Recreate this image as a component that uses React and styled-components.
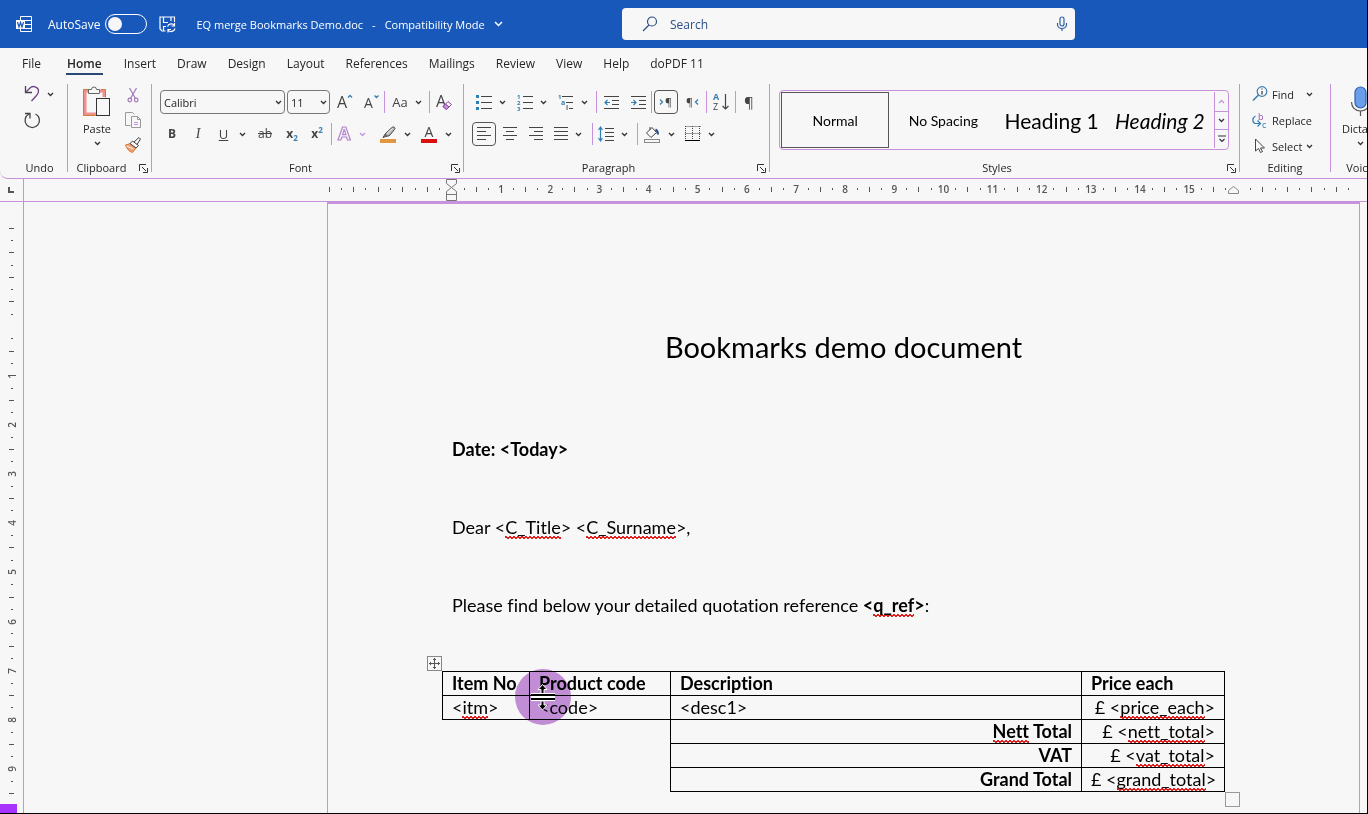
import React from "react";
import styled, { createGlobalStyle, css } from "styled-components";

const LILAC = "#c792dc";
const PAPER = "#f7f7f7";
const INK = "#262626";

const GlobalStyle = createGlobalStyle`
  * {
    box-sizing: border-box;
  }

  body {
    margin: 0;
    background: ${PAPER};
    color: ${INK};
    font-family: "Open Sans", "Noto Sans", sans-serif;
    font-size: 11px;
  }

  button, input, select {
    font: inherit;
    color: inherit;
  }

  button {
    display: inline-flex;
    align-items: center;
    justify-content: center;
    padding: 0;
    border: 0;
    background: none;
    cursor: pointer;
  }

  svg {
    display: block;
    flex: none;
    overflow: visible;
  }
`

const Window = styled.div`
  position: relative;
  display: flex;
  flex-direction: column;
  min-height: 100vh;
  overflow: hidden;
  border-right: 1px solid #000;
  border-bottom: 1px solid #000;
`

/* ---------- title bar ---------- */

const TitleBar = styled.header`
  display: grid;
  grid-template-columns: 622px minmax(200px, 453px) 1fr;
  align-items: center;
  height: 48px;
  background: #1858bb;
  color: #fff;
`

const TitleLeft = styled.div`
  display: flex;
  align-items: center;
  padding-left: 16px;
  white-space: nowrap;
`

const AutoSave = styled.label`
  display: flex;
  align-items: center;
  gap: 5px;
  margin: 0 12px 0 15px;
  font-size: 12px;
`

const Switch = styled.input`
  appearance: none;
  display: flex;
  align-items: center;
  width: 42px;
  height: 20px;
  margin: 0;
  padding: 0 2px;
  border: 1px solid #fff;
  border-radius: 10px;

  &::before {
    content: "";
    width: 14px;
    height: 14px;
    border-radius: 50%;
    background: ${PAPER};
  }
`

const FileName = styled.button`
  gap: 9px;
  margin-left: 20px;
`

const SearchBox = styled.label`
  display: flex;
  align-items: center;
  height: 32px;
  padding: 0 7px 0 20px;
  border-radius: 4px;
  background: ${PAPER};
  color: #2b4f86;
  font-size: 12px;

  input {
    flex: 1;
    min-width: 0;
    margin-left: 12px;
    padding: 0;
    border: 0;
    outline: 0;
    background: none;
  }

  input::placeholder {
    color: #2b4f86;
    opacity: 1;
  }
`

/* ---------- tabs ---------- */

const Tabs = styled.nav`
  display: flex;
  gap: 21px;
  height: 32px;
  padding: 4px 22px 0;
`

const Tab = styled.a`
  height: 24px;
  line-height: 24px;
  font-size: 12px;
  color: ${INK};
  text-decoration: none;
  white-space: nowrap;

  ${({ $active }) => $active && css`
    height: 23px;
    margin-left: 4px;
    padding: 0 1px;
    border-bottom: 2px solid #2b4a73;
    font-weight: 600;
  `}
`

/* ---------- ribbon ---------- */

const Ribbon = styled.section`
  display: flex;
  height: 99px;
  padding-top: 4px;
  border-bottom: 1px solid ${LILAC};
  border-bottom-left-radius: 8px;
`

const Group = styled.div`
  display: flex;
  flex-direction: column;
  flex: ${({ $grow }) => ($grow ? "1 0 470px" : "none")};
  width: ${({ $w }) => $w}px;
  height: 88px;
  padding: ${({ $pad }) => $pad || "0"};
  border-right: ${({ $last }) => ($last ? "0" : `1px solid ${LILAC}`)};
`

const GroupFoot = styled.div`
  position: relative;
  height: 8px;
  margin-top: auto;
  line-height: 8px;
  font-size: 11px;
  text-align: center;
  padding-right: ${({ $shift }) => $shift || 0}px;

  button {
    position: absolute;
    right: 3px;
    top: 0;
  }
`

const Row = styled.div`
  display: flex;
  align-items: center;
  height: 24px;
  margin-bottom: 8px;
`

const Stack = styled.div`
  display: flex;
  flex-direction: column;
  align-items: flex-start;
  gap: ${({ $gap }) => $gap}px;
`

const ClipLayout = styled.div`
  display: flex;
  align-items: flex-start;
`

const Tool = styled.button`
  flex: none;
  gap: 7px;
  width: ${({ $w }) => $w || 24}px;
  height: ${({ $h }) => $h || 24}px;
  margin-left: ${({ $ml }) => $ml || 0}px;
  border-radius: 4px;
  ${({ $on }) => $on && "border: 1px solid #555;"}
`

const Sep = styled.span`
  flex: none;
  width: 1px;
  height: 22px;
  margin-left: ${({ $ml }) => $ml || 0}px;
  background: ${LILAC};
`

const Combo = styled.div`
  position: relative;
  width: ${({ $w }) => $w}px;
  height: 24px;
  margin-right: ${({ $mr }) => $mr || 0}px;

  select {
    appearance: none;
    width: 100%;
    height: 24px;
    padding: 0 3px;
    border: 1px solid #777;
    border-radius: 4px;
    background: none;
  }

  svg {
    position: absolute;
    right: 3px;
    top: 10px;
    pointer-events: none;
  }
`

const Glyph = styled.span`
  min-width: 16px;
  text-align: center;
  font-size: ${({ $size }) => $size || 13}px;
  line-height: 16px;
  color: #444;
  font-weight: ${({ $bold }) => ($bold ? 700 : 400)};
  font-style: ${({ $italic }) => ($italic ? "italic" : "normal")};
  font-family: ${({ $serif }) => ($serif ? '"Liberation Serif", serif' : "inherit")};
  text-decoration: ${({ $line }) => $line || "none"};
  white-space: nowrap;

  sub, sup {
    font-size: 8px;
    line-height: 1;
    color: #3a7fae;
  }
`

const BigTool = styled.button`
  flex-direction: column;
  gap: 4px;
  width: ${({ $w }) => $w}px;
  padding-top: 2px;
  line-height: 16px;
`

const EditTool = styled.button`
  gap: 4px;
  height: 20px;

  svg + span {
    margin-right: ${({ $gap }) => $gap || 0}px;
  }
`

const Gallery = styled.div`
  display: flex;
  height: 60px;
  margin-right: 10px;
  padding: 1px 0 1px 1px;
  border: 1px solid ${LILAC};
  border-radius: 4px;
`

const StyleItem = styled.button`
  flex: 1 1 0;
  min-width: 0;
  height: 56px;
  color: #000;
  white-space: nowrap;
  font-family: Lato, sans-serif;
  font-size: ${({ $head }) => ($head ? 21 : 14)}px;
  font-style: ${({ $italic }) => ($italic ? "italic" : "normal")};
  border: 1px solid ${({ $on }) => ($on ? "#555" : "transparent")};
`

const GalleryNav = styled.div`
  display: grid;
  grid-template-rows: repeat(3, 1fr);
  width: 14px;
  border-left: 1px solid ${LILAC};

  button + button {
    border-top: 1px solid ${LILAC};
  }
`

/* ---------- rulers ---------- */

const TopRuler = styled.div`
  display: grid;
  grid-template-columns: 24px 299px 1fr 12px;
  height: 23px;
  border-bottom: 1px solid ${LILAC};
`

const RulerCorner = styled.div`
  display: flex;
  align-items: center;
  padding-left: 8px;
  border-right: 1px solid ${LILAC};
`

const Scale = styled.div`
  display: grid;
  ${({ $vertical }) => $vertical
    ? "grid-template-rows: repeat(47, minmax(0, 1fr)); height: 578px;"
    : "grid-template-columns: repeat(84, minmax(0, 1fr)); grid-column: 3; padding-bottom: 2px;"}
`

const Mark = styled.span`
  position: relative;
  display: flex;
  align-items: center;
  justify-content: center;
  font-size: 10px;
  line-height: 12px;
  color: #555;

  i {
    background: #555;
    width: ${({ $vertical, $tall }) => ($vertical ? ($tall ? 5 : 2) : 1)}px;
    height: ${({ $vertical, $tall }) => ($vertical ? 1 : $tall ? 5 : 2)}px;
  }

  b {
    font-weight: 600;
    ${({ $vertical }) => $vertical && "transform: rotate(-90deg);"}
  }

  svg {
    position: absolute;
    top: 0;
  }
`

/* ---------- document ---------- */

const Workspace = styled.main`
  display: grid;
  grid-template-columns: 24px 303px 1fr 7px;
  flex: 1;
`

const SideRuler = styled.div`
  padding-top: 20px;
  border-right: 1px solid ${LILAC};
`

const Page = styled.article`
  grid-column: 3;
  padding: 125px 134px 0 124px;
  border: 1px solid ${LILAC};
  border-top-width: 2px;
  border-bottom: 0;
  color: #000;
  font-family: Lato, Carlito, sans-serif;
  font-size: 18px;
  line-height: 24px;
  font-variant-ligatures: none;

  h1 {
    margin: 0 -10px 72px 0;
    font-size: 29px;
    line-height: 36px;
    font-weight: 400;
    text-align: center;
  }

  p {
    margin: 0 0 54px;
  }
`

const Typo = styled.span`
  padding-bottom: 1px;
  background:
    linear-gradient(45deg, transparent 40%, #d22 40%, #d22 60%, transparent 60%) 0 100% / 4px 3px repeat-x,
    linear-gradient(135deg, transparent 40%, #d22 40%, #d22 60%, transparent 60%) 2px 100% / 4px 3px repeat-x;
`

const TableWrap = styled.div`
  position: relative;
  margin: 0 0 0 -10px;
`

const Table = styled.table`
  width: 100%;
  border-collapse: collapse;
  table-layout: fixed;

  th, td {
    height: 24px;
    padding: 0 9px;
    border: 1px solid #000;
    line-height: 23px;
    text-align: left;
    white-space: nowrap;
  }

  .amount {
    text-align: right;
  }

  .blank {
    border: 0;
  }
`

const MoveHandle = styled.button`
  position: absolute;
  left: -15px;
  top: -15px;
  width: 15px;
  height: 15px;
  border: 1px solid #888;
`

const ResizeHandle = styled.span`
  position: absolute;
  right: -15px;
  bottom: -15px;
  width: 15px;
  height: 15px;
  border: 1px solid #999;
`

const Pointer = styled.div`
  position: absolute;
  left: 73px;
  top: -2px;
  display: grid;
  place-items: center;
  width: 56px;
  height: 56px;

  &::before {
    content: "";
    position: absolute;
    inset: 0;
    border-radius: 50%;
    background: ${LILAC};
    mix-blend-mode: multiply;
  }

  svg {
    position: relative;
  }
`

const Progress = styled.div`
  position: absolute;
  left: 0;
  bottom: -1px;
  width: 17px;
  height: 10px;
  background: #a833ff;
`

/* ---------- icons ---------- */

const Icon = ({ w = 16, h = 16, color = "#444", sw = 1, children }) => (
  <svg width={w} height={h} viewBox={`0 0 ${w} ${h}`} fill="none" stroke={color} strokeWidth={sw} aria-hidden="true">
    {children}
  </svg>
)

const Caret = ({ color = "#333", up }) => (
  <Icon w={7} h={5} color={color} sw={1.3}>
    <path d={up ? "M1 4l2.5-2.5L6 4" : "M1 1l2.5 2.5L6 1"} />
  </Icon>
)

const SvgText = ({ children, fill = "#444", size = 14, ...rest }) => (
  <text stroke="none" fill={fill} fontSize={size} {...rest}>{children}</text>
)

const WordIcon = () => (
  <Icon w={17} h={17} color="#fff">
    <path d="M4.5 4V.5h11v15h-11V13M9 4.500h6M9 8.500h6M9 12.500h6" />
    <rect x="0" y="4" width="9" height="9" fill="#fff" stroke="none" />
    <path stroke="#1858bb" strokeWidth="1.2" d="M1.500 6l1.500 5 1.500-4.500 1.500 4.500L7.500 6" />
  </Icon>
)

const SaveIcon = () => (
  <Icon w={17} h={17} color="#fff" sw={1.2}>
    <path d="M6.500 15H3L1 13V1h14.500v5M4.500 1v5.500H9M12 1v4M4.500 15v-4.500h2.500" />
    <path d="M8.500 10.500a4 4 0 0 1 7-1M15.500 7v3h-3M16 12.500a4 4 0 0 1-7 1.500M9 16.500v-3h3" />
  </Icon>
)

const SearchIcon = () => (
  <Icon color="#2b4f86" sw={1.2}>
    <circle cx="10" cy="5.500" r="4.500" />
    <path d="M7 9L1 15" />
  </Icon>
)

const SmallMic = () => (
  <Icon w={12} h={16} color="#2b5fa0" sw={1.2}>
    <rect x="4" y="1" width="4" height="9" rx="2" />
    <path d="M1.500 7v1.500a4.500 4 0 0 0 9 0V7M6 12.500V15" />
  </Icon>
)

const UndoIcon = () => (
  <Icon h={18} sw={1.3}>
    <path d="M1.500 1v6.500H8" />
    <path d="M1.500 7.500L6 3c3-3 8-1 8.500 2.500.3 2-.5 3.500-2 5L7.500 16" stroke="#6b3f80" />
  </Icon>
)

const RedoIcon = () => (
  <Icon w={17} h={17} sw={1.3}>
    <path d="M11.500 2a7.200 7.200 0 1 1-6.500 0M1 1.500h5v5" />
  </Icon>
)

const PasteIcon = () => (
  <Icon w={28} h={31}>
    <path d="M7 5H2v23h11M17 5h4v6" stroke="#f0908c" strokeWidth="3" />
    <path d="M7 3.500H.5v26h12M18 3.500h4.500v8" stroke="#c9812f" />
    <path d="M5.500 7.500v-4h3a2.500 2.500 0 0 1 5 0h3v4z" fill={PAPER} stroke="#666" />
    <rect x="13.500" y="12.500" width="13" height="17" fill={PAPER} stroke="#333" />
  </Icon>
)

const CutIcon = () => (
  <Icon w={12} color="#a078bd" sw={1.2}>
    <path d="M2.500 1l6 10.500M9.500 1l-6 10.500" />
    <circle cx="2.800" cy="13" r="1.800" />
    <circle cx="9.200" cy="13" r="1.800" />
  </Icon>
)

const CopyIcon = () => (
  <Icon w={17} h={17} color="#999">
    <path d="M5.500 13.500h-5V.5h7l2 2" />
    <path d="M6.500 4.500h6l3 3v8h-9zM12.500 4.500v3h3" />
    <path d="M9 10.500h4M9 12.500h4" stroke={LILAC} />
  </Icon>
)

const PainterIcon = () => (
  <Icon>
    <path d="M.5 8l5-1.500 5.500 4.500-3.500 4.500C4 14.500 2 12 .5 8z" fill="#f0a070" stroke="#d9772b" />
    <path d="M1.500 9l7 3" stroke={PAPER} />
    <path d="M5 6.500L7.500 4l6 4.500L11 11zM9 5l5-4.500L15.500 2 12 7.500" fill={PAPER} stroke="#444" />
  </Icon>
)

const GrowA = ({ shrink }) => (
  <Icon w={17} h={18}>
    <SvgText x="0" y="15" size={shrink ? 14 : 16}>A</SvgText>
    <path d={shrink ? "M10.500 2.500l2 2 2-2" : "M11 4.500l2-2 2 2"} stroke="#3a7fae" strokeWidth="1.300" />
  </Icon>
)

const ClearFormat = () => (
  <Icon w={17} h={18}>
    <SvgText x="0" y="14" size={16}>A</SvgText>
    <path d="M7 13.500l5-5 3.500 3-5 5z" fill={PAPER} stroke="#8a3fa0" />
    <path d="M7 13.500l2.500-2.500 3.500 3-2.500 2.500z" fill={LILAC} stroke="#8a3fa0" />
  </Icon>
)

const TextEffects = () => (
  <Icon>
    <text x="2" y="14" fontSize="18" fontWeight="700" fill={PAPER} stroke="#b486cc" strokeWidth="1.200">A</text>
  </Icon>
)

const Highlighter = () => (
  <Icon w={17} h={17}>
    <path d="M5.500 7.500L12 1.500c1.500-1.500 4 .5 2.500 2L9 10H6zM5.500 7.500L3 11.500l4-1.500" fill="#bbb" />
    <path d="M7 7.500L12.500 2.500" stroke={PAPER} />
    <rect x="0" y="13" width="16" height="4" fill="#e2973f" stroke="none" />
  </Icon>
)

const FontColor = () => (
  <Icon w={17} h={17}>
    <SvgText x="3.500" y="11" size={14}>A</SvgText>
    <rect x="0" y="13" width="16" height="4" fill="#d91010" stroke="none" />
  </Icon>
)

const Bullets = () => (
  <Icon>
    <path d="M5 2.500h11M5 8.500h11M5 14.500h11" />
    <path d="M0 2.500h3M0 8.500h3M0 14.500h3" stroke="#2f7fb5" strokeWidth="3" />
  </Icon>
)

const Numbering = () => (
  <Icon>
    <path d="M6 2.500h10M6 8.500h10M6 14.500h10" />
    {[1, 2, 3].map((n) => (
      <SvgText key={n} x="0" y={n * 6 - 1} size={6} fill="#2f7fb5" fontWeight="700">{n}</SvgText>
    ))}
  </Icon>
)

const Multilevel = () => (
  <Icon>
    <path d="M4 2.500h11M8 8.500h7M11 14.500h4" />
    <SvgText x="0" y="5" size={6} fill="#2f7fb5" fontWeight="700">1</SvgText>
    <SvgText x="3" y="11" size={7} fill="#2f7fb5" fontWeight="700">a</SvgText>
    <SvgText x="8" y="16" size={7} fill="#666" fontWeight="700">i</SvgText>
  </Icon>
)

const Indent = ({ out }) => (
  <Icon w={15} h={15}>
    <path d="M0 1.500h15M8 5.500h7M8 9.500h7M0 13.500h15" />
    <path d={out ? "M6 7.500H1M3.500 5L1 7.500 3.500 10" : "M0 7.500h5M2.500 5L5 7.500 2.500 10"} stroke="#2f7fb5" strokeWidth="1.200" />
  </Icon>
)

const Direction = ({ rtl }) => (
  <Icon w={14}>
    <path d={rtl ? "M13 5.500L10.500 8l2.500 2.500" : "M1 5.500L3.500 8 1 10.500"} stroke="#3a7fae" strokeWidth="1.300" />
    <SvgText x={rtl ? 1 : 6} y="12" size={11}>¶</SvgText>
  </Icon>
)

const SortIcon = () => (
  <Icon w={17} h={18}>
    <SvgText x="0" y="7" size={9} fill="#3a7fae" fontWeight="700">A</SvgText>
    <SvgText x="0" y="17" size={9}>Z</SvgText>
    <path d="M12.500 1v15M9.500 13l3 3 3-3" strokeWidth="1.200" />
  </Icon>
)

const ALIGN = {
  left: ["0h14", "0h9", "0h14", "0h9"],
  center: ["0h14", "3h8", "0h14", "3h8"],
  right: ["0h14", "5h9", "0h14", "5h9"],
  justify: ["0h14", "0h14", "0h14", "0h14"],
}

const Align = ({ kind }) => (
  <Icon w={14} h={14}>
    <path d={ALIGN[kind].map((seg, i) => `M${seg.replace("h", ` ${i * 4 + 0.5}h`)}`).join("")} />
  </Icon>
)

const LineSpacing = () => (
  <Icon>
    <path d="M7 2.500h9M7 6.500h9M7 10.500h9M7 14.500h9" />
    <path d="M2.500 1v14M.5 4l2-3 2 3M.5 12l2 3 2-3" stroke="#2f7fb5" strokeWidth="1.200" />
  </Icon>
)

const Shading = () => (
  <Icon w={17} h={17}>
    <path d="M2.500 7L8 1.500l4.500 5L7 11.500zM6 4V1" />
    <path d="M11.500 3.500c2 1 2.500 3 2.500 5" stroke="#2b4f86" strokeWidth="2" />
    <rect x=".5" y="13.500" width="15" height="3" stroke="#888" />
  </Icon>
)

const Borders = () => (
  <Icon>
    <path d="M.5 .5h15M.5 7.500h15M.5 0v14M7.500 0v14M14.500 0v14" strokeDasharray="1 1" />
    <path d="M0 14.500h15" stroke="#000" />
  </Icon>
)

const Launcher = () => (
  <Icon w={9} h={9} color="#333">
    <path d="M.5 7V.5H7M3 3l4 4M8.500 4v4.500H4" />
  </Icon>
)

const FindIcon = () => (
  <Icon color="#3a7fae" sw={1.2}>
    <circle cx="10" cy="5.500" r="4.800" />
    <path d="M6.500 9L1 14.500" strokeWidth="1.600" />
    <path d="M10 2.500v1M10 5v3.500" stroke="#333" />
  </Icon>
)

const ReplaceIcon = () => (
  <Icon h={17}>
    <SvgText x="6" y="8" size={9} fill="#8a4fa8">b</SvgText>
    <SvgText x="10" y="16" size={9} fill="#2f7fb5">c</SvgText>
    <path d="M3.500 4C0 6 0 11 3.500 11.500H8M5.500 8.500l3 3-3 3" stroke="#2f7fb5" strokeWidth="1.200" />
  </Icon>
)

const SelectIcon = () => (
  <Icon>
    <path d="M3.500 1v12l3-2.500 2 4 2-1-2-3.500h4z" />
  </Icon>
)

const DictateIcon = () => (
  <Icon w={21} h={31} color="#555" sw={1.2}>
    <rect x="5" y="1" width="11" height="21" rx="5.500" fill="#6a9eea" stroke="#2f62ad" />
    <path d="M1.500 16c0 5 3.500 9 9 9s9-4 9-9M10.500 25v5" />
  </Icon>
)

const RowResize = () => (
  <Icon w={24} h={28} color="#000">
    <path d="M0 12h24M0 16h24" stroke="#fff" strokeWidth="4" />
    <path d="M0 12h24M0 16h24" strokeWidth="2" />
    <path d="M11.500 1.500l4.500 5h-3v4h-3v-4H7zM11.500 27l4.500-5h-3v-4h-3v4H7z" fill="#000" stroke="#fff" />
  </Icon>
)

/* ---------- pieces ---------- */

function Split({ w, label, children, muted }) {
  return (
    <Tool $w={w} aria-label={label}>
      {children}
      <Caret color={muted ? LILAC : "#333"} />
    </Tool>
  )
}

function Foot({ children, launcher, shift }) {
  return (
    <GroupFoot $shift={shift}>
      {children}
      {launcher && <button aria-label={`${children} settings`}><Launcher /></button>}
    </GroupFoot>
  )
}

// four marks to the centimetre, counted from the margin
function Marks({ from, count, vertical, last }) {
  return (
    <Scale $vertical={vertical}>
      {Array.from({ length: count }, (_, n) => {
        const i = from + n
        const numbered = i > 0 && i % 4 === 0 && i / 4 <= last
        const atIndent = i === 0 || i / 4 === last + 1
        return (
          <Mark key={i} $vertical={vertical} $tall={i % 2 === 0}>
            {numbered && <b>{i / 4}</b>}
            {!numbered && !atIndent && <i />}
            {!vertical && i === 0 && (
              <Icon w={13} h={22} color="#777">
                <path d="M1.500 .5h10v4l-5 4-5-4zM1.500 15.500v-3l5-4 5 4v3zM1.500 15.500h10v6h-10z" />
              </Icon>
            )}
            {!vertical && i !== 0 && atIndent && (
              <Icon w={21} h={22} color="#888">
                <path d="M.5 14.500v-3l5-4 5 4v3z" />
              </Icon>
            )}
          </Mark>
        )
      })}
    </Scale>
  )
}

const TABS = ["File", "Home", "Insert", "Draw", "Design", "Layout", "References", "Mailings", "Review", "View", "Help", "doPDF 11"]

const TOTALS = [
  [<><Typo>Nett</Typo> Total</>, "nett_total"],
  ["VAT", "vat_total"],
  ["Grand Total", "grand_total"],
]

const Price = ({ field }) => <td className="amount">£ &lt;<Typo>{field}</Typo>&gt;</td>

export default function App() {
  return (
    <Window>
      <GlobalStyle />
      <TitleBar>
        <TitleLeft>
          <WordIcon />
          <AutoSave>AutoSave <Switch type="checkbox" role="switch" /></AutoSave>
          <button aria-label="Save"><SaveIcon /></button>
          <FileName>
            <span>EQ merge Bookmarks Demo.doc</span>
            <span>-</span>
            <span>Compatibility Mode</span>
            <Icon w={9} h={6} color="#fff" sw={1.5}><path d="M1 1l3.500 3.500L8 1" /></Icon>
          </FileName>
        </TitleLeft>
        <SearchBox>
          <SearchIcon />
          <input type="search" placeholder="Search" aria-label="Search" />
          <SmallMic />
        </SearchBox>
      </TitleBar>

      <Tabs>
        {TABS.map((tab) => (
          <Tab key={tab} href={`#${tab}`} $active={tab === "Home"}>{tab}</Tab>
        ))}
      </Tabs>

      <Ribbon>
        <Group $w={68} $pad="0 0 0 12px">
          <Stack $gap={6}>
            <Tool $w={54} $h={20} aria-label="Undo"><UndoIcon /><Caret /></Tool>
            <Tool $w={40} $h={20} aria-label="Redo"><RedoIcon /></Tool>
          </Stack>
          <Foot>Undo</Foot>
        </Group>

        <Group $w={84}>
          <ClipLayout>
            <BigTool $w={58}><PasteIcon />Paste<Caret /></BigTool>
            <Stack $gap={3}>
              <Tool $w={14} $h={22} aria-label="Cut"><CutIcon /></Tool>
              <Tool $w={14} $h={22} aria-label="Copy"><CopyIcon /></Tool>
              <Tool $w={14} $h={22} aria-label="Format painter"><PainterIcon /></Tool>
            </Stack>
          </ClipLayout>
          <Foot launcher shift={16}>Clipboard</Foot>
        </Group>

        <Group $w={312} $pad="6px 0 0 8px">
          <Row>
            <Combo $w={125} $mr={2}>
              <select aria-label="Font" defaultValue="Calibri"><option>Calibri</option></select>
              <Caret />
            </Combo>
            <Combo $w={43}>
              <select aria-label="Font size" defaultValue="11"><option>11</option></select>
              <Caret />
            </Combo>
            <Tool $w={30} aria-label="Grow font"><GrowA /></Tool>
            <Tool $w={24} aria-label="Shrink font"><GrowA shrink /></Tool>
            <Sep />
            <Tool $w={44} aria-label="Change case"><Glyph>Aa</Glyph><Caret /></Tool>
            <Sep />
            <Tool $w={28} aria-label="Clear formatting"><ClearFormat /></Tool>
          </Row>
          <Row>
            <Tool aria-label="Bold"><Glyph $bold $size={12}>B</Glyph></Tool>
            <Tool $w={28} aria-label="Italic"><Glyph $italic $serif $size={14}>I</Glyph></Tool>
            <Split w={37} label="Underline"><Glyph $line="underline">U</Glyph></Split>
            <Tool $w={32} aria-label="Strikethrough"><Glyph $line="line-through" $size={12}>ab</Glyph></Tool>
            <Tool $w={22} aria-label="Subscript"><Glyph $bold $size={12}>x<sub>2</sub></Glyph></Tool>
            <Tool $w={28} aria-label="Superscript"><Glyph $bold $size={12}>x<sup>2</sup></Glyph></Tool>
            <Sep />
            <Split w={38} label="Text effects" muted><TextEffects /></Split>
            <Split w={50} label="Highlight"><Highlighter /></Split>
            <Split w={32} label="Font colour"><FontColor /></Split>
          </Row>
          <Foot launcher shift={22}>Font</Foot>
        </Group>

        <Group $w={306} $pad="6px 0 0 8px">
          <Row>
            <Split w={38} label="Bullets"><Bullets /></Split>
            <Split w={44} label="Numbering"><Numbering /></Split>
            <Split w={38} label="Multilevel list"><Multilevel /></Split>
            <Sep $ml={4} />
            <Tool $w={28} aria-label="Decrease indent"><Indent out /></Tool>
            <Tool $w={26} aria-label="Increase indent"><Indent /></Tool>
            <Sep />
            <Tool $ml={2} $on aria-label="Left to right"><Direction /></Tool>
            <Tool $w={28} aria-label="Right to left"><Direction rtl /></Tool>
            <Sep />
            <Tool $w={28} aria-label="Sort"><SortIcon /></Tool>
            <Sep />
            <Tool $w={26} aria-label="Show marks"><Glyph $size={15}>¶</Glyph></Tool>
          </Row>
          <Row>
            <Tool $on aria-label="Align left"><Align kind="left" /></Tool>
            <Tool $w={28} aria-label="Centre"><Align kind="center" /></Tool>
            <Tool aria-label="Align right"><Align kind="right" /></Tool>
            <Split w={40} label="Justify"><Align kind="justify" /></Split>
            <Sep $ml={4} />
            <Split w={40} label="Line spacing"><LineSpacing /></Split>
            <Sep $ml={4} />
            <Split w={42} label="Shading"><Shading /></Split>
            <Split w={40} label="Borders"><Borders /></Split>
          </Row>
          <Foot launcher shift={24}>Paragraph</Foot>
        </Group>

        <Group $grow $pad="6px 0 0 9px">
          <Gallery>
            <StyleItem $on>Normal</StyleItem>
            <StyleItem>No Spacing</StyleItem>
            <StyleItem $head>Heading 1</StyleItem>
            <StyleItem $head $italic>Heading 2</StyleItem>
            <GalleryNav>
              <button aria-label="Previous styles"><Caret up color={LILAC} /></button>
              <button aria-label="Next styles"><Caret /></button>
              <button aria-label="More styles">
                <Icon w={8} h={8} color="#333" sw={1.2}><path d="M0 1h8M1.500 4L4 6.500 6.500 4" /></Icon>
              </button>
            </GalleryNav>
          </Gallery>
          <Foot launcher shift={24}>Styles</Foot>
        </Group>

        <Group $w={91} $pad="0 0 0 12px">
          <Stack $gap={6}>
            <EditTool $gap={8}><FindIcon /><span>Find</span><Caret /></EditTool>
            <EditTool><ReplaceIcon /><span>Replace</span></EditTool>
            <EditTool><SelectIcon /><span>Select</span><Caret /></EditTool>
          </Stack>
          <Foot shift={12}>Editing</Foot>
        </Group>

        <Group $w={58} $last>
          <BigTool $w={58}><DictateIcon />Dictate<Caret /></BigTool>
          <Foot>Voice</Foot>
        </Group>
      </Ribbon>

      <TopRuler>
        <RulerCorner>
          <Icon w={7} h={7} color="#555" sw={2}><path d="M1 0v5h5" /></Icon>
        </RulerCorner>
        <Marks from={-10} count={84} last={15} />
      </TopRuler>

      <Workspace>
        <SideRuler>
          <Marks vertical from={-8} count={47} last={9} />
        </SideRuler>
        <Page>
          <h1>Bookmarks demo document</h1>
          <p><strong>Date: &lt;Today&gt;</strong></p>
          <p>Dear &lt;<Typo>C_Title</Typo>&gt; &lt;<Typo>C_Surname</Typo>&gt;,</p>
          <p>Please find below your detailed quotation reference <strong>&lt;<Typo>q_ref</Typo>&gt;</strong>:</p>
          <TableWrap>
            <MoveHandle aria-label="Move table">
              <Icon w={13} h={13} color="#555"><path d="M6.500 1v11M1 6.500h11M5 2.500h3M5 10.500h3M2.500 5v3M10.500 5v3" /></Icon>
            </MoveHandle>
            <Table>
              <colgroup>
                <col width="87" />
                <col width="141" />
                <col />
                <col width="143" />
              </colgroup>
              <tbody>
                <tr>
                  <th>Item No</th>
                  <th>Product code</th>
                  <th>Description</th>
                  <th>Price each</th>
                </tr>
                <tr>
                  <td>&lt;<Typo>itm</Typo>&gt;</td>
                  <td>&lt;code&gt;</td>
                  <td>&lt;desc1&gt;</td>
                  <Price field="price_each" />
                </tr>
                {TOTALS.map(([label, field]) => (
                  <tr key={field}>
                    <td className="blank" colSpan={2} />
                    <th className="amount">{label}</th>
                    <Price field={field} />
                  </tr>
                ))}
              </tbody>
            </Table>
            <Pointer><RowResize /></Pointer>
            <ResizeHandle />
          </TableWrap>
        </Page>
      </Workspace>
      <Progress />
    </Window>
  )
}
